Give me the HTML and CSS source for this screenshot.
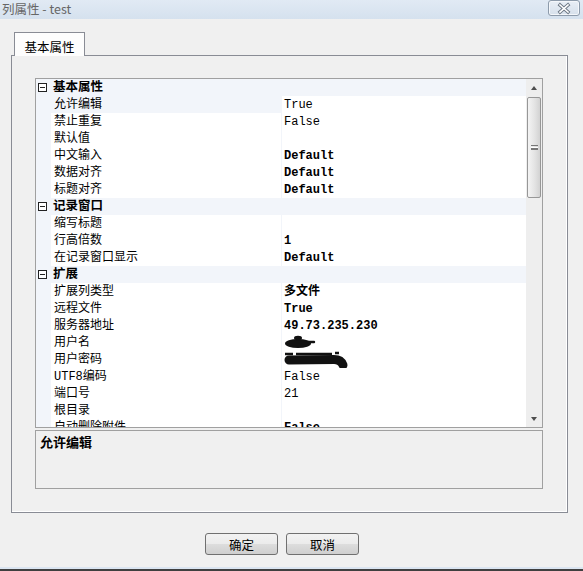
FILE: index.html
```html
<!DOCTYPE html>
<html lang="zh-CN">
  <head>
    <meta charset="UTF-8" />
    <title>列属性 - test</title>
    <link rel="stylesheet" href="styles.css">
  </head>
  <body>
    <div class="titlebar">
      <span class="title">列属性 - test</span>
      <span class="close">
        <svg width="30" height="13" viewBox="0 0 30 13">
          <path d="M11 3 L19 10 M19 3 L11 10" stroke="#6b7683" stroke-width="3.4" stroke-linecap="square" fill="none"/>
          <path d="M11 3 L19 10 M19 3 L11 10" stroke="#fff" stroke-width="1.6" stroke-linecap="square" fill="none"/>
        </svg>
      </span>
    </div>

    <div class="content">
      <div class="tabs">
        <div class="tab">基本属性</div>
      </div>

      <div class="panel">
        <!-- 属性表格 -->
        <div class="grid">
          <div class="rows">
            <div class="row cat">
              <span class="margin"><svg width="9" height="9" viewBox="0 0 9 9"><rect x="0.5" y="0.5" width="8" height="8" fill="#fff" stroke="#222"/><path d="M2 4.5 H7" stroke="#222"/></svg></span>
              <span class="cat-name">基本属性</span>
            </div>
            <div class="row sel"><span class="margin"></span><span class="name">允许编辑</span><span class="value">True</span></div>
            <div class="row"><span class="margin"></span><span class="name">禁止重复</span><span class="value">False</span></div>
            <div class="row"><span class="margin"></span><span class="name">默认值</span><span class="value"></span></div>
            <div class="row"><span class="margin"></span><span class="name">中文输入</span><span class="value bold">Default</span></div>
            <div class="row"><span class="margin"></span><span class="name">数据对齐</span><span class="value bold">Default</span></div>
            <div class="row"><span class="margin"></span><span class="name">标题对齐</span><span class="value bold">Default</span></div>

            <div class="row cat">
              <span class="margin"><svg width="9" height="9" viewBox="0 0 9 9"><rect x="0.5" y="0.5" width="8" height="8" fill="#fff" stroke="#222"/><path d="M2 4.5 H7" stroke="#222"/></svg></span>
              <span class="cat-name">记录窗口</span>
            </div>
            <div class="row"><span class="margin"></span><span class="name">缩写标题</span><span class="value"></span></div>
            <div class="row"><span class="margin"></span><span class="name">行高倍数</span><span class="value bold">1</span></div>
            <div class="row"><span class="margin"></span><span class="name">在记录窗口显示</span><span class="value bold">Default</span></div>

            <div class="row cat">
              <span class="margin"><svg width="9" height="9" viewBox="0 0 9 9"><rect x="0.5" y="0.5" width="8" height="8" fill="#fff" stroke="#222"/><path d="M2 4.5 H7" stroke="#222"/></svg></span>
              <span class="cat-name">扩展</span>
            </div>
            <div class="row"><span class="margin"></span><span class="name">扩展列类型</span><span class="value bold">多文件</span></div>
            <div class="row"><span class="margin"></span><span class="name">远程文件</span><span class="value bold">True</span></div>
            <div class="row"><span class="margin"></span><span class="name">服务器地址</span><span class="value bold">49.73.235.230</span></div>
            <div class="row"><span class="margin"></span><span class="name">用户名</span>
              <span class="value">
                <svg class="scribble" width="34" height="14" viewBox="0 0 34 14">
                  <ellipse cx="14" cy="8.5" rx="13" ry="4.6" fill="#111"/>
                  <ellipse cx="14" cy="3" rx="4" ry="2.2" fill="#111"/>
                  <path d="M24 7 L30 7" stroke="#111" stroke-width="2.4" stroke-linecap="round"/>
                </svg>
              </span>
            </div>
            <div class="row"><span class="margin"></span><span class="name">用户密码</span>
              <span class="value">
                <svg class="scribble" width="64" height="18" viewBox="0 0 64 18">
                  <path d="M1 2 H9 M12 2 H48 M51 1 H55" stroke="#111" stroke-width="2.4"/>
                  <path d="M5 8 L50 7.5 Q57 7.5 59 13" stroke="#111" stroke-width="9" stroke-linecap="round" fill="none"/>
                </svg>
              </span>
            </div>
            <div class="row"><span class="margin"></span><span class="name">UTF8编码</span><span class="value">False</span></div>
            <div class="row"><span class="margin"></span><span class="name">端口号</span><span class="value">21</span></div>
            <div class="row"><span class="margin"></span><span class="name">根目录</span><span class="value"></span></div>
            <div class="row"><span class="margin"></span><span class="name">自动删除附件</span><span class="value bold">False</span></div>
          </div>

          <div class="scrollbar">
            <div class="arrow"><span class="up"></span></div>
            <div class="thumb"><span class="grip"></span></div>
            <div class="track"></div>
            <div class="arrow"><span class="down"></span></div>
          </div>
        </div>

        <!-- descrição da propriedade -->
        <div class="desc">
          <p class="desc-title">允许编辑</p>
        </div>
      </div>

      <div class="buttons">
        <button class="btn">确定</button>
        <button class="btn">取消</button>
      </div>
    </div>

    <div class="frame-bottom"></div>
  </body>
</html>
```

FILE: styles.css
```css
* {
  padding: 0;
  margin: 0;
  box-sizing: border-box;
}

body {
  width: 583px;
  height: 571px;
  overflow: hidden;
  display: flex;
  flex-direction: column;
  background-color: #f0f0f0;
  font-family: "Noto Sans CJK SC", sans-serif;
  font-size: 12px;
  color: #000;
}

/* barra de título */
.titlebar {
  height: 19px;
  display: flex;
  justify-content: space-between;
  align-items: flex-start;
  padding-left: 2px;
  background: linear-gradient(#e1eaf4, #d5e1ee);
}

.title {
  line-height: 17px;
  font-size: 12.5px;
  color: #666;
}

.close {
  width: 32px;
  height: 16px;
  margin-right: 3px;
  display: flex;
  align-items: center;
  justify-content: center;
  border: 1px solid #8d9bab;
  border-radius: 3px;
  box-shadow: inset 0 0 0 1px #f4f7fb;
  background: linear-gradient(#e9eff6, #d6e0eb);
}

.content {
  padding: 13px 0 0 11px;
}

/* aba */
.tabs {
  display: flex;
  padding-left: 3px;
}

.tab {
  width: 71px;
  height: 24px;
  margin-bottom: -1px;
  padding-top: 4px;
  text-align: center;
  font-size: 12.5px;
  background-color: #fdfdfd;
  border: 1px solid #898c95;
  border-bottom: none;
  position: relative; /* fica por cima da borda do painel */
  z-index: 1;
}

.panel {
  width: 557px;
  height: 458px;
  padding: 22px 24px 23px 23px;
  border: 1px solid #898c95;
  box-shadow: inset -1px -1px 0 #fff;
  background-color: #f0f0f0;
}

/* property grid */
.grid {
  height: 350px;
  display: flex;
  border: 1px solid #a0a0a0;
  background-color: #f2f5fa;
}

.rows {
  flex: 1;
  overflow: hidden;
  font-family: "Liberation Mono", "Noto Sans CJK SC", monospace;
}

.row {
  height: 17px;
  display: grid;
  grid-template-columns: 14px 230px 245px;
  column-gap: 1px;
  padding-bottom: 1px;
  line-height: 16px;
}

.row > span {
  padding-top: 1px;
}

.row .name {
  padding-left: 3px;
  background-color: #fff;
  white-space: nowrap;
}

.row.sel .name {
  background-color: #f2f5fa;
}

.row .value {
  padding-left: 2px;
  background-color: #fff;
  white-space: nowrap;
}

.bold {
  font-weight: bold;
}

.row.cat {
  grid-template-columns: 17px 1fr;
  column-gap: 0;
}

.row.cat .margin {
  display: flex;
  align-items: center;
  padding: 0 0 0 2px;
}

.cat-name {
  font-weight: bold;
  font-size: 12.5px;
}

.scribble {
  display: block;
  overflow: visible;
}

/* barra de rolagem */
.scrollbar {
  width: 16px;
  display: flex;
  flex-direction: column;
  background-color: #eeeeee;
}

.arrow {
  height: 17px;
  display: flex;
  align-items: center;
  justify-content: center;
}

.up {
  border-left: 3.5px solid transparent;
  border-right: 3.5px solid transparent;
  border-bottom: 4px solid #4e4e4e;
}

.down {
  border-left: 3.5px solid transparent;
  border-right: 3.5px solid transparent;
  border-top: 4px solid #4e4e4e;
}

.thumb {
  height: 101px;
  margin: 1px 1px 0;
  display: flex;
  align-items: center;
  justify-content: center;
  border: 1px solid #979797;
  border-radius: 2px;
  background: linear-gradient(90deg, #f4f4f4, #e2e2e2 60%, #d2d2d2);
}

.grip {
  width: 7px;
  height: 5px;
  border-top: 1px solid #777;
  border-bottom: 1px solid #777;
  background: linear-gradient(#fff 0 1px, #777 1px 2px, transparent 2px);
  background-position: 0 1px;
  background-repeat: no-repeat;
  background-size: 7px 3px;
}

.track {
  flex: 1;
}

/* caixa de descrição */
.desc {
  height: 59px;
  margin-top: 2px;
  padding: 2px 4px;
  border: 1px solid #a0a0a0;
  background-color: #f0f0f0;
}

.desc-title {
  font-weight: bold;
  font-size: 13px;
  line-height: 17px;
}

/* botões */
.buttons {
  display: flex;
  gap: 8px;
  padding: 20px 0 0 194px;
}

.btn {
  width: 73px;
  height: 22px;
  font-family: "Noto Sans CJK SC", sans-serif;
  font-size: 12.5px;
  color: #000;
  border: 1px solid #707070;
  border-radius: 3px;
  background: linear-gradient(#f2f2f2 0%, #ebebeb 50%, #dddddd 51%, #cfcfcf 100%);
}

.frame-bottom {
  margin-top: auto;
  height: 4px;
  border-top: 2px solid #dbe5f1;
  background-color: #3f3f3f;
}
```
